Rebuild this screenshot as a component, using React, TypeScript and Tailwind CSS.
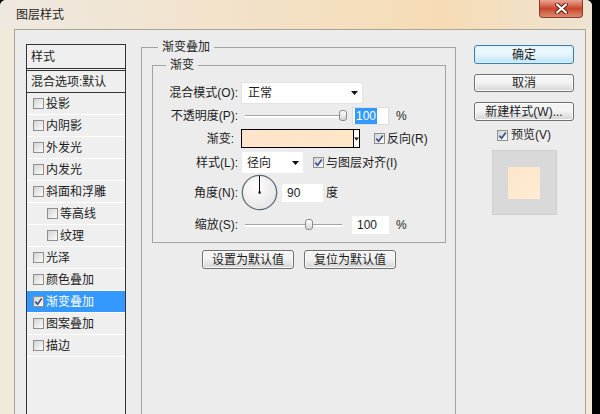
// Photoshop "图层样式" dialog – gradient overlay page

const LAYER_ITEMS: Array<{ name: string; indent?: boolean; checked?: boolean; active?: boolean }> = [
  { name: '投影' },
  { name: '内阴影' },
  { name: '外发光' },
  { name: '内发光' },
  { name: '斜面和浮雕' },
  { name: '等高线', indent: true },
  { name: '纹理', indent: true },
  { name: '光泽' },
  { name: '颜色叠加' },
  { name: '渐变叠加', checked: true, active: true },
  { name: '图案叠加' },
  { name: '描边' },
]

function Check({ checked = false }: { checked?: boolean }) {
  return (
    <span className="flex h-[11px] w-[11px] shrink-0 items-center justify-center border border-[#8e8f8f] bg-linear-to-br from-[#d4d4d4] to-[#fcfcfc]">
      {checked && (
        <svg width="9" height="9" viewBox="0 0 9 9">
          <path d="M1.3 4.6 L3.6 7.2 L7.8 1.4" fill="none" stroke="#3a4f86" strokeWidth="1.7" />
        </svg>
      )}
    </span>
  )
}

function DownArrow({ w = 7 }: { w?: number }) {
  return (
    <svg width={w} height={4} viewBox="0 0 7 4">
      <path d="M0 0H7L3.5 4Z" fill="#111" />
    </svg>
  )
}

function Slider({ value, min, max }: { value: number; min: number; max: number }) {
  const left = 2 + ((value - min) / (max - min)) * 96
  return (
    <div className="relative ml-[3px] flex h-[18px] w-[106px] items-center">
      <div className="ml-[4px] h-[3px] w-[97px] border-t border-[#a5a5a5] bg-white" />
      <div
        className="absolute top-[3px] h-[11px] w-[8px] rounded-[3px] border border-[#8a8a8a] bg-linear-to-b from-white to-[#d6d6d6]"
        style={{ left }}
      />
    </div>
  )
}

function GrayButton({ children, className = '' }: { children: React.ReactNode; className?: string }) {
  return (
    <button
      className={`flex items-center justify-center rounded-[3px] border border-[#707070] bg-linear-to-b from-[#f4f4f4] from-45% to-[#d4d4d4] leading-none shadow-[inset_0_0_0_1px_#fbfbfb] ${className}`}
    >
      {children}
    </button>
  )
}

export default function App() {
  return (
    <div className="h-[414px] w-[600px] overflow-hidden bg-black font-['Liberation_Sans','Noto_Sans_CJK_SC',sans-serif] text-[12px] text-[#1c1c1c]">
      <div className="flex h-[414px] w-[592px] flex-col rounded-t-[6px] bg-[#f1eadb]">
        {/* title bar */}
        <div className="flex h-[29px] shrink-0 rounded-t-[6px] bg-linear-to-r from-[#eee9e0] via-[#f6dcb5] via-75% to-[#eee4d2]">
          <span className="ml-[16px] mt-[8px] leading-[14px]">图层样式</span>
          <div className="ml-auto mr-[9px] flex h-[18px] w-[44px] items-center justify-center rounded-b-[4px] border border-t-0 border-[#8a3b2e] bg-linear-to-b from-[#e9a595] via-[#c8442c] to-[#dc8a6c]">
            <svg width="13" height="11" viewBox="0 0 13 11">
              <path d="M2 1.5 L11 9.5 M11 1.5 L2 9.5" stroke="#5a1a10" strokeWidth="4" strokeLinecap="round" />
              <path d="M2 1.5 L11 9.5 M11 1.5 L2 9.5" stroke="#fff" strokeWidth="2.2" strokeLinecap="round" />
            </svg>
          </div>
        </div>

        {/* dialog body */}
        <div className="ml-[14px] mr-[6px] flex flex-1 items-start overflow-hidden border border-b-0 border-[#aaa493] bg-[#ececec] pl-[11px]">
          {/* styles list */}
          <div className="mt-[14px] h-[400px] w-[100px] shrink-0 border border-[#333] bg-[#efefef]">
            <div className="flex h-[26px] items-center border-b-[3px] border-double border-[#333] pl-[4px] leading-none">
              样式
            </div>
            <div className="flex h-[22px] items-center border-b border-[#333] pl-[4px] leading-none">
              混合选项:默认
            </div>
            {LAYER_ITEMS.map((item) => (
              <div
                key={item.name}
                className={`flex h-[22px] items-center gap-[2px] border-b border-white leading-none ${
                  item.indent ? 'pl-[20px]' : 'pl-[6px]'
                } ${item.active ? 'bg-[#3399ff] text-white' : ''}`}
              >
                <Check checked={item.checked} />
                {item.name}
              </div>
            ))}
          </div>

          {/* gradient overlay group */}
          <fieldset className="ml-[15px] mt-[9px] h-[400px] w-[315px] shrink-0 border border-[#a3a3a3] pl-[10px] pr-[9px]">
            <legend className="ml-[6px] px-[4px] leading-[16px]">渐变叠加</legend>
            <fieldset className="mt-[2px] border border-[#a3a3a3] pb-[8px] pt-[9px]">
              <legend className="ml-[13px] px-[4px] leading-[16px]">渐变</legend>

              <div className="flex h-[22px] items-center leading-none">
                <span className="w-[85px] text-right">混合模式(O):</span>
                <div className="ml-[3px] flex h-[22px] w-[122px] items-center justify-between border border-[#e3e3e3] bg-white pl-[6px] pr-[4px]">
                  <span>正常</span>
                  <DownArrow />
                </div>
              </div>

              <div className="mt-[3px] flex h-[18px] items-center leading-none">
                <span className="w-[85px] text-right">不透明度(P):</span>
                <Slider value={100} min={0} max={100} />
                <div className="ml-[5px] flex h-[18px] w-[37px] items-center border border-[#dddddd] bg-white pl-[2px]">
                  <span className="bg-[#3399ff] px-[1px] py-[2px] text-white">100</span>
                </div>
                <span className="ml-[7px]">%</span>
              </div>

              <div className="mt-[4px] flex h-[19px] items-center leading-none">
                <span className="w-[85px] pr-[4px] text-right">渐变:</span>
                <div className="ml-[3px] flex h-[19px] w-[119px] border border-black">
                  <div className="flex-1 bg-linear-to-r from-[#fde4cb] to-[#fde7c6]" />
                  <div className="flex w-[6px] items-center justify-center border-l border-black bg-white">
                    <DownArrow w={5} />
                  </div>
                </div>
                <span className="ml-[14px] flex items-center gap-[2px]">
                  <Check checked />
                  反向(R)
                </span>
              </div>

              <div className="mt-[4px] flex h-[21px] items-center leading-none">
                <span className="w-[85px] text-right">样式(L):</span>
                <div className="ml-[4px] flex h-[21px] w-[61px] items-center justify-between bg-white pl-[5px] pr-[4px]">
                  <span>径向</span>
                  <DownArrow />
                </div>
                <span className="ml-[10px] flex items-center gap-[2px]">
                  <Check checked />
                  与图层对齐(I)
                </span>
              </div>

              <div className="mt-[1px] flex h-[37px] items-center leading-none">
                <span className="w-[85px] text-right">角度(N):</span>
                <svg className="ml-[3px]" width="37" height="37" viewBox="0 0 37 37">
                  <defs>
                    <radialGradient id="dial" cx="40%" cy="35%" r="70%">
                      <stop offset="0" stopColor="#ffffff" />
                      <stop offset="1" stopColor="#e4e4e4" />
                    </radialGradient>
                  </defs>
                  <circle cx="18.5" cy="18.5" r="17.2" fill="url(#dial)" stroke="#5f6b78" strokeWidth="1.3" />
                  <line x1="18.5" y1="18.5" x2="18.5" y2="2" stroke="#111" strokeWidth="1" />
                  <rect x="17.5" y="17.5" width="2.2" height="2.2" fill="#111" />
                </svg>
                <div className="ml-[4px] flex h-[18px] w-[41px] items-center bg-white pl-[5px]">90</div>
                <span className="ml-[3px]">度</span>
              </div>

              <div className="mt-[5px] flex h-[18px] items-center leading-none">
                <span className="w-[85px] text-right">缩放(S):</span>
                <Slider value={100} min={10} max={150} />
                <div className="ml-[5px] flex h-[18px] w-[37px] items-center bg-white pl-[5px]">100</div>
                <span className="ml-[7px]">%</span>
              </div>
            </fieldset>

            <div className="mt-[7px] flex justify-center gap-[10px]">
              <GrayButton className="h-[19px] w-[92px]">设置为默认值</GrayButton>
              <GrayButton className="h-[19px] w-[92px]">复位为默认值</GrayButton>
            </div>
          </fieldset>

          {/* action column */}
          <div className="ml-[18px] mt-[15px] flex w-[100px] shrink-0 flex-col">
            <button className="flex h-[19px] items-center justify-center rounded-[3px] border border-[#3c7fb1] bg-linear-to-b from-[#eaf6fd] from-45% to-[#bde4f8] leading-none shadow-[inset_0_0_0_1px_#d9f0fc]">
              确定
            </button>
            <GrayButton className="mt-[10px] h-[18px]">取消</GrayButton>
            <GrayButton className="mt-[10px] h-[19px]">新建样式(W)...</GrayButton>
            <div className="mt-[7px] flex h-[14px] items-center justify-center gap-[3px] leading-none">
              <Check checked />
              预览(V)
            </div>
            <div className="mx-auto mt-[8px] flex h-[65px] w-[65px] items-center justify-center border border-[#cfcfcf] bg-[#d9d9d9]">
              <div className="h-[32px] w-[32px] bg-linear-to-br from-[#fde6c8] to-[#fdecd4]" />
            </div>
          </div>
        </div>
      </div>
    </div>
  )
}
